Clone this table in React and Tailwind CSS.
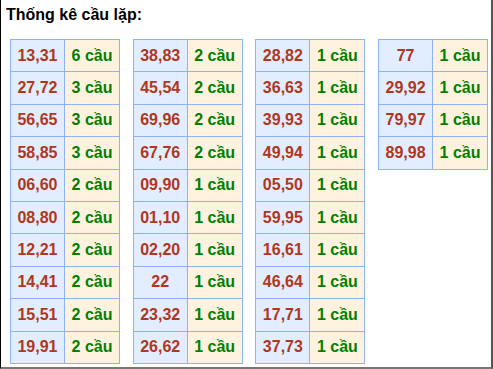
import React from 'react';

// Repeated pairs, one column per table
const TABLES = [
  [['13,31', 6], ['27,72', 3], ['56,65', 3], ['58,85', 3], ['06,60', 2], ['08,80', 2], ['12,21', 2], ['14,41', 2], ['15,51', 2], ['19,91', 2]],
  [['38,83', 2], ['45,54', 2], ['69,96', 2], ['67,76', 2], ['09,90', 1], ['01,10', 1], ['02,20', 1], ['22', 1], ['23,32', 1], ['26,62', 1]],
  [['28,82', 1], ['36,63', 1], ['39,93', 1], ['49,94', 1], ['05,50', 1], ['59,95', 1], ['16,61', 1], ['46,64', 1], ['17,71', 1], ['37,73', 1]],
  [['77', 1], ['29,92', 1], ['79,97', 1], ['89,98', 1]],
];

function PairTable({ rows }) {
  return (
    <div className="w-[110px] border-l border-t border-[#8db3f5] self-start">
      {rows.map(([pair, n], i) => (
        <div key={i} className="flex h-[32.4px]">
          <div className="w-[54px] flex items-center justify-center bg-[#e2eeff] border-r border-b border-[#8db3f5] text-[#b0361c]">
            {pair}
          </div>
          <div className="w-[55px] flex items-center justify-center bg-[#fff3e0] border-r border-b border-[#8db3f5] text-[#008000]">
            {n} cầu
          </div>
        </div>
      ))}
    </div>
  );
}

export default function App() {
  return (
    <div className="w-[493px] h-[369px] bg-white border-l border-l-black border-r-2 border-r-[#555] border-b-2 border-b-[#777] font-['Liberation_Sans',Arial,sans-serif] font-bold text-[16px]">
      <div className="pl-[5px] pt-[5px] h-[39px] text-black leading-[20px]">Thống kê cầu lặp:</div>
      <div className="flex gap-[12.7px] pl-[9px]">
        {TABLES.map((rows, i) => (
          <PairTable key={i} rows={rows} />
        ))}
      </div>
    </div>
  );
}
